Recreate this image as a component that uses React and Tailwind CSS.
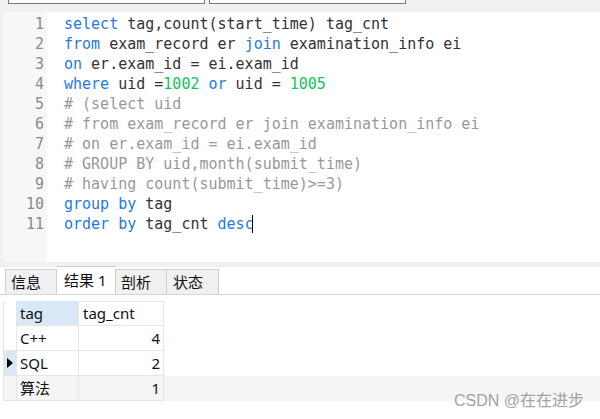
import React from 'react';

const K = ({ children }) => <span className="text-[#2479e3]">{children}</span>;
const N = ({ children }) => <span className="text-[#13c25c]">{children}</span>;
const C = ({ children }) => <span className="text-[#999999]">{children}</span>;

const lines = [
  <><K>select</K> tag,count(start_time) tag_cnt</>,
  <><K>from</K> exam_record er <K>join</K> examination_info ei</>,
  <><K>on</K> er.exam_id = ei.exam_id</>,
  <><K>where</K> uid =<N>1002</N> <K>or</K> uid = <N>1005</N></>,
  <C># (select uid</C>,
  <C># from exam_record er join examination_info ei</C>,
  <C># on er.exam_id = ei.exam_id</C>,
  <C># GROUP BY uid,month(submit_time)</C>,
  <C># having count(submit_time)&gt;=3)</C>,
  <><K>group</K> <K>by</K> tag</>,
  <><K>order</K> <K>by</K> tag_cnt <K>des</K><K>c</K><span className="border-l border-black -ml-[2px]"></span></>,
];

const rows = [
  { tag: 'C++', cnt: 4 },
  { tag: 'SQL', cnt: 2, current: true },
  { tag: '算法', cnt: 1, alt: true },
];

const ui = { fontFamily: '"Noto Sans", "Noto Sans CJK SC", sans-serif' };
const mono = { fontFamily: '"DejaVu Sans Mono", "Liberation Mono", monospace' };

export default function App() {
  return (
    <div className="relative w-[600px] h-[419px] overflow-hidden bg-white">
      <div className="flex h-[12px] bg-[#f0f0f0]">
        <div className="ml-[8px] w-[197px] h-[4px] bg-white border-x border-b border-[#7a7a7a]"></div>
        <div className="ml-[4px] w-[197px] h-[4px] bg-white border-x border-b border-[#7a7a7a]"></div>
      </div>

      <div className="flex h-[250px]">
        <div className="w-[47px] bg-[#f7f7f7] border-l-[3px] border-[#f0f0f0] pt-[2px] pr-[3px] text-right text-[15px] leading-[20px] text-[#8a8a8a]" style={mono}>
          {lines.map((_, i) => (
            <div key={i}>{i + 1}</div>
          ))}
        </div>
        <div className="flex-1 pt-[2px] pl-[17px] text-[15px] leading-[20px] text-[#333333] whitespace-pre" style={mono}>
          {lines.map((l, i) => (
            <div key={i}>{l}</div>
          ))}
        </div>
      </div>

      <div className="h-[5px] bg-[#f0f0f0]"></div>

      <div className="flex items-end h-[28px] border-b border-[#d6d6d6] pl-[5px] text-[15px] text-[#111]" style={ui}>
        <div className="w-[52px] h-[25px] bg-[#f0f0f0] border border-b-0 border-[#cfcfcf] pl-[5px] leading-[24px]">信息</div>
        <div className="w-[58px] h-[28px] bg-white border-t border-[#cfcfcf] pl-[7px] leading-[26px]">结果 1</div>
        <div className="w-[52px] h-[25px] bg-[#f0f0f0] border border-b-0 border-[#cfcfcf] pl-[5px] leading-[24px]">剖析</div>
        <div className="w-[52px] h-[25px] bg-[#f0f0f0] border border-b-0 border-l-0 border-[#cfcfcf] pl-[6px] leading-[24px]">状态</div>
      </div>

      <div className="pt-[6px] pl-[3px] text-[15px] text-[#111]" style={ui}>
        <div className="flex h-[25px]">
          <div className="w-[13px] border-l border-[#e6e6e6]"></div>
          <div className="w-[63px] bg-[#d9e8f6] border-r border-b border-[#e6e6e6] pl-[4px] leading-[24px]">tag</div>
          <div className="w-[85px] border-r border-b border-t border-[#e6e6e6] pl-[4px] leading-[23px]">tag_cnt</div>
        </div>
        {rows.map((r) => (
          <div key={r.tag} className={`flex h-[25px] ${r.alt ? 'bg-[#f5f5f5]' : ''}`}>
            <div className={`w-[13px] flex items-center justify-center border-l border-b border-[#e6e6e6] ${r.current ? 'bg-[#d9e8f6]' : ''}`}>
              {r.current && (
                <svg width="6" height="10" viewBox="0 0 6 10"><path d="M0 0 L6 5 L0 10 Z" fill="#000" /></svg>
              )}
            </div>
            <div className="w-[63px] border-x border-b border-[#e6e6e6] pl-[3px] leading-[24px]">{r.tag}</div>
            <div className="w-[85px] border-r border-b border-[#e6e6e6] pr-[3px] text-right leading-[24px]">{r.cnt}</div>
          </div>
        ))}
      </div>

      <div className="absolute right-[16px] bottom-[6px] text-[16px] text-[#a3a3a3]" style={{ fontFamily: '"Liberation Sans", "Noto Sans CJK SC", sans-serif' }}>
        CSDN @在在进步
      </div>
    </div>
  );
}
